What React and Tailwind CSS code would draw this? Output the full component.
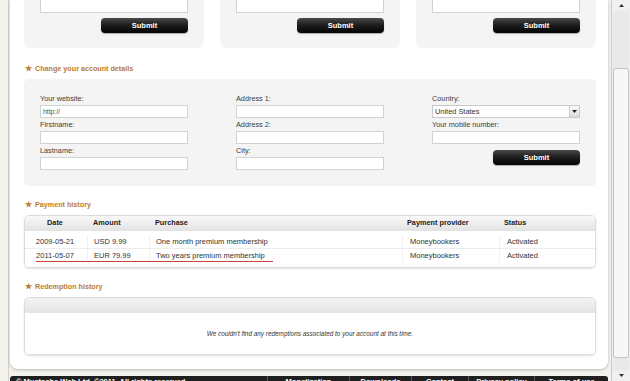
import React from "react";

const font = { fontFamily: '"Liberation Sans", Arial, sans-serif' };

function SubmitButton() {
  return (
    <button className="block w-[87px] h-[15px] rounded-[4px] bg-gradient-to-b from-[#4a4a4a] via-[#1c1c1c] to-[#050505] text-white text-[7.5px] font-bold leading-[15px] shadow-[0_1px_1px_rgba(0,0,0,0.3)]">
      Submit
    </button>
  );
}

function Field({ label, value }) {
  return (
    <div className="flex flex-col mt-[1px]">
      <div className="h-[12px] leading-[12px] text-[7.3px] text-[#3c3c3c]">{label}</div>
      <div className="h-[13px] w-[148px] bg-white border border-[#d2d2d2] text-[6.8px] text-[#555] leading-[11px] pl-[2px]">
        {value}
      </div>
    </div>
  );
}

function Heading({ children }) {
  return (
    <div className="flex items-center gap-[3px] h-[10px] pl-[1px] text-[#bc7c2e] font-bold text-[7.2px] leading-[10px]">
      <span className="text-[7.5px]">★</span>
      <span>{children}</span>
    </div>
  );
}

function TopBox() {
  return (
    <div className="w-[180px] h-[56px] bg-[#f4f4f4] rounded-b-[6px] px-[16px] pt-[7px] flex flex-col items-end">
      <div className="h-[14px] w-[148px] bg-white border border-[#d2d2d2]"></div>
      <div className="mt-[5px] flex">
        <SubmitButton />
      </div>
    </div>
  );
}

function App() {
  const payments = [
    ["2009-05-21", "USD 9.99", "One month premium membership", "Moneybookers", "Activated"],
    ["2011-05-07", "EUR 79.99", "Two years premium membership", "Moneybookers", "Activated"],
  ];

  return (
    <div className="w-[630px] h-[381px] overflow-hidden bg-[#f4f2ed] flex" style={font}>
      <div className="w-[9px] shrink-0 border-r border-[#d6d2ca]"></div>

      <div className="w-[602px] shrink-0 pl-[1px] flex flex-col">
        {/* white page panel */}
        <div className="w-[598px] bg-white rounded-b-[8px] shadow-[0_1px_3px_rgba(0,0,0,0.25)] pl-[14px] pr-[12px] pb-[14px]">
          <div className="flex gap-[16px] -mt-[8px]">
            <TopBox />
            <TopBox />
            <TopBox />
          </div>

          <div className="mt-[16px]">
            <Heading>Change your account details</Heading>
          </div>
          <div className="mt-[5px] w-[572px] h-[107px] bg-[#f4f4f4] rounded-[5px] px-[16px] pt-[13px] flex gap-[48px]">
            <div className="flex flex-col">
              <Field label="Your website:" value="http://" />
              <Field label="Firstname:" />
              <Field label="Lastname:" />
            </div>
            <div className="flex flex-col">
              <Field label="Address 1:" />
              <Field label="Address 2:" />
              <Field label="City:" />
            </div>
            <div className="flex flex-col">
              <div className="flex flex-col mt-[1px]">
                <div className="h-[12px] leading-[12px] text-[7.3px] text-[#3c3c3c]">Country:</div>
                <div className="h-[13px] w-[148px] bg-white border border-[#c8c8c8] flex items-center justify-between pl-[2px]">
                  <span className="text-[7.4px] text-[#333] leading-[11px]">United States</span>
                  <span className="w-[10px] h-[11px] bg-gradient-to-b from-[#fafafa] to-[#dcdcdc] border-l border-[#cfcfcf] flex items-center justify-center">
                    <svg width="5" height="3" viewBox="0 0 5 3">
                      <path d="M0 0 L5 0 L2.5 3 Z" fill="#222" />
                    </svg>
                  </span>
                </div>
              </div>
              <Field label="Your mobile number:" />
              <div className="mt-[6px] flex justify-end">
                <SubmitButton />
              </div>
            </div>
          </div>

          <div className="mt-[14px]">
            <Heading>Payment history</Heading>
          </div>
          <div className="mt-[5px] w-[572px] border border-[#dcdcdc] rounded-[5px] shadow-[0_1px_2px_rgba(0,0,0,0.12)] overflow-hidden">
            <div className="h-[15px] grid grid-cols-[62px_62px_253px_97px_96px] items-center bg-gradient-to-b from-[#f8f8f8] to-[#e2e2e2] text-[7.3px] font-bold text-[#222]">
              <div className="text-center pr-[2px]">Date</div>
              <div className="pl-[6px]">Amount</div>
              <div className="pl-[6px]">Purchase</div>
              <div className="pl-[5px]">Payment provider</div>
              <div className="pl-[5px]">Status</div>
            </div>
            <div className="relative py-[5px] bg-white">
              {payments.map((row, i) => (
                <div
                  key={i}
                  className={`h-[13px] grid grid-cols-[62px_62px_253px_97px_96px] items-center text-[7.5px] text-[#333] ${
                    i === 0 ? "border-b border-[#ececec]" : ""
                  }`}
                >
                  <div className="text-center pr-[2px]">{row[0]}</div>
                  <div className="pl-[6px] h-full flex items-center border-l border-[#f0f0f0]">{row[1]}</div>
                  <div className="pl-[6px] h-full flex items-center border-l border-[#f0f0f0]">{row[2]}</div>
                  <div className="pl-[7px] h-full flex items-center border-l border-[#f0f0f0]">{row[3]}</div>
                  <div className="pl-[7px] h-full flex items-center border-l border-[#f0f0f0]">{row[4]}</div>
                </div>
              ))}
              <div className="absolute left-[11px] top-[30px] w-[237px] h-[1px] bg-[#c8453c]"></div>
            </div>
          </div>

          <div className="mt-[14px]">
            <Heading>Redemption history</Heading>
          </div>
          <div className="mt-[5px] w-[572px] border border-[#dcdcdc] rounded-[5px] shadow-[0_1px_2px_rgba(0,0,0,0.12)] overflow-hidden">
            <div className="h-[15px] bg-gradient-to-b from-[#f3f3f3] to-[#e3e3e3]"></div>
            <div className="h-[41px] bg-white flex items-center justify-center text-[6.4px] italic text-[#333]">
              We couldn't find any redemptions associated to your account at this time.
            </div>
          </div>
        </div>

        {/* footer */}
        <div className="mt-[7px] w-[598px] h-[20px] bg-[#1f1f1f] rounded-t-[3px] flex text-white text-[7.5px] font-bold leading-[12px]">
          <div className="w-[258px] pl-[6px] border-r border-[#555]">© Mustache Web Ltd. ©2011. All rights reserved.</div>
          <div className="w-[82px] text-center border-r border-[#555]">Monetization</div>
          <div className="w-[62px] text-center border-r border-[#555]">Downloads</div>
          <div className="w-[57px] text-center border-r border-[#555]">Contact</div>
          <div className="w-[66px] text-center border-r border-[#555]">Privacy policy</div>
          <div className="flex-1 text-center">Terms of use</div>
        </div>
      </div>

      {/* scrollbar */}
      <div className="w-[19px] shrink-0 bg-[#f0f0f0] border-l border-[#c9c9c9] flex flex-col">
        <div className="h-[11px] flex items-center justify-center">
          <svg width="5" height="3" viewBox="0 0 5 3">
            <path d="M0 3 L5 3 L2.5 0 Z" fill="#333" />
          </svg>
        </div>
        <div className="flex-1 mx-[1px] flex flex-col">
          <div className="flex-1 bg-[#e9e9e9]"></div>
          <div className="h-[290px] bg-[#f7f7f7] border border-[#c4c4c4] rounded-[2px]"></div>
          <div className="h-[12px] bg-[#e9e9e9]"></div>
        </div>
        <div className="h-[11px] flex items-center justify-center">
          <svg width="5" height="3" viewBox="0 0 5 3">
            <path d="M0 0 L5 0 L2.5 3 Z" fill="#333" />
          </svg>
        </div>
      </div>
    </div>
  );
}

export default App;
